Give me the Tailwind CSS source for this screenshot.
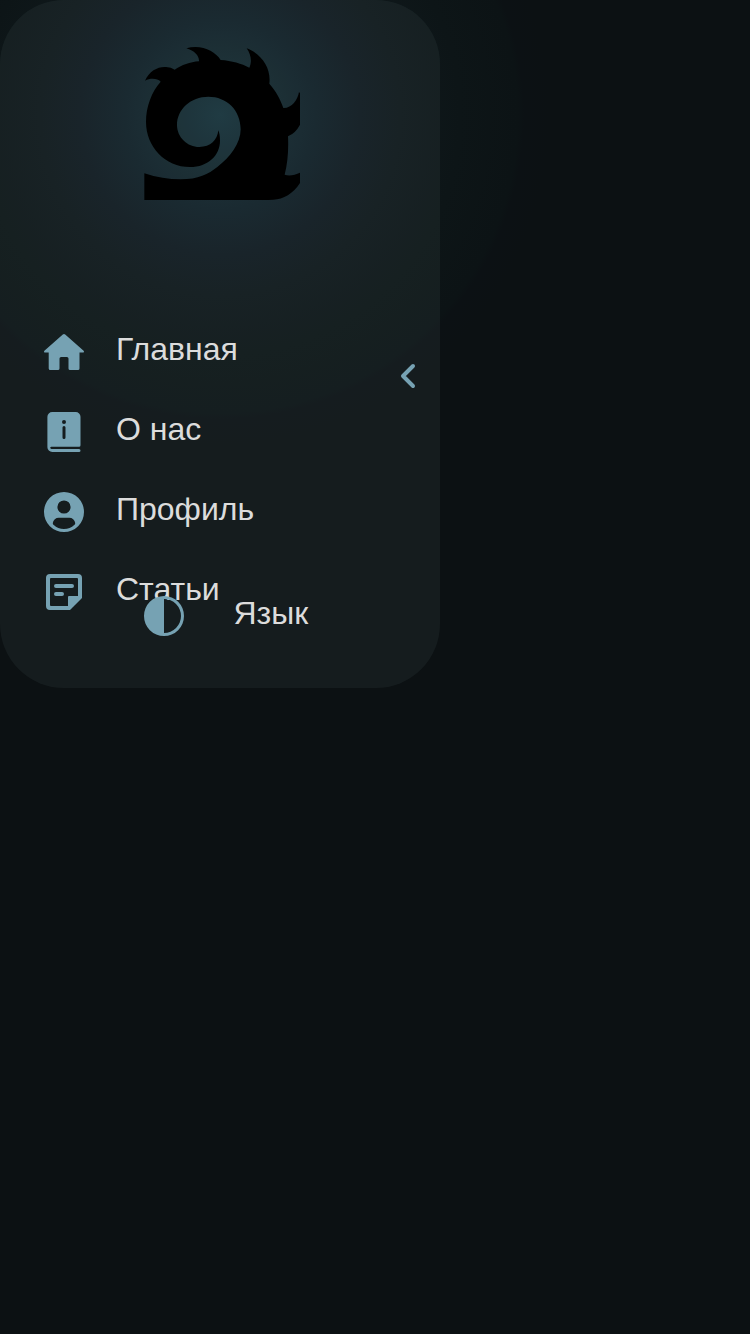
<!DOCTYPE html>
<html lang="ru">
<head>
<meta charset="utf-8">
<title>Меню</title>
<script src="https://cdn.jsdelivr.net/npm/@tailwindcss/browser@4"></script>
</head>
<body class="h-screen overflow-hidden bg-[#0c1113] bg-[radial-gradient(circle_at_220px_115px,#18323a_0px,#14272e_55px,#112027_95px,#101a20_140px,#0f181b_180px,#0d1517_240px,#0c1315_298px,#0c1114_304px,#0c1113_330px)] font-['Liberation_Sans',Arial,sans-serif] text-[32px] text-[#dcdcdc]">
<aside class="relative flex h-[688px] w-[440px] flex-col rounded-[64px] bg-[#d0ffff]/[0.047]">
  <div class="flex h-[312px] pt-11 pl-36">
    <svg class="size-[156px]" viewBox="42 42 468 468"><path d="M43 430C80 442 115 448 152 448C205 448 235 432 262 411C300 382 332 340 332 298C332 240 290 200 235 200C182 200 141 238 141 285C141 322 172 351 208 351C242 351 262 330 265 301C268 308 270 318 270 332C270 375 235 411 180 411C105 411 48 350 48 275C48 230 65 185 92 155C82 144 60 144 45 152C58 122 85 109 108 111Q124 112 134 119C155 105 180 96 207 94C208 78 194 62 169 55C212 42 255 62 272 90C305 92 335 101 358 113C366 95 364 75 350 55C395 72 424 115 418 161C437 182 450 205 460 234C485 235 503 210 507 186L510 190V284Q497 309 474 319C476 360 473 400 464 434C478 439 495 435 510 428V459C490 490 460 509 430 509L415 510H43Z"/></svg>
  </div>
  <nav class="flex flex-col pl-10">
    <a class="flex h-20 items-center gap-7">
      <svg class="size-12 text-[#76a2b3]" viewBox="0 0 24 24" fill="currentColor"><path d="M11.4 3.25a.9.900 0 0 1 1.2 0l9.2 8.100c.4.400.2.950-.4.950h-1.650V20.200a.8.800 0 0 1-.8.800h-3.900a.8.800 0 0 1-.8-.8v-4.900a.8.800 0 0 0-.8-.8h-2.900a.8.800 0 0 0-.8.800v4.900a.8.800 0 0 1-.8.800H5.150a.8.800 0 0 1-.8-.8v-7.900H2.600c-.6 0-.8-.55-.4-.95z"/></svg>
      <span class="pb-[7px]">Главная</span>
    </a>
    <a class="flex h-20 items-center gap-7">
      <svg class="size-12 text-[#76a2b3]" viewBox="0 0 24 24" fill="currentColor" fill-rule="evenodd"><path d="M3.700 4.400A2.400 2.400 0 0 1 6.100 2h11.750a2.400 2.400 0 0 1 2.400 2.400v14.200a.75.750 0 0 1-.75.750H5.700a.5.500 0 0 0 0 1.150h13.800a.75.750 0 0 1 0 1.500H6.100a2.400 2.400 0 0 1-2.400-2.400zM12 8a1 1 0 1 0 0-2 1 1 0 0 0 0 2zm-.75 1.750v5a.75.750 0 0 0 1.500 0v-5a.75.750 0 0 0-1.500 0z"/></svg>
      <span class="pb-[7px]">О нас</span>
    </a>
    <a class="flex h-20 items-center gap-7">
      <svg class="size-12 text-[#76a2b3]" viewBox="0 0 24 24" fill="currentColor" fill-rule="evenodd"><path d="M2 12a10 10 0 1 1 20 0 10 10 0 0 1-20 0zM15.300 9.500a3.300 3.300 0 1 0-6.600 0 3.300 3.300 0 0 0 6.600 0zM9.400 14.850a3 3 0 0 0-3 2.600c0 .5.200.8.500 1.050 1.300 1.200 3.100 2 5.100 2s3.800-.8 5.100-2c.3-.25.5-.55.500-1.050a3 3 0 0 0-3-2.600z"/></svg>
      <span class="pb-[7px]">Профиль</span>
    </a>
    <a class="flex h-20 items-center gap-7">
      <svg class="size-12 text-[#76a2b3]" viewBox="0 0 24 24" fill="currentColor" fill-rule="evenodd"><path d="M5 3h14a2 2 0 0 1 2 2v10l-6 6H5a2 2 0 0 1-2-2V5a2 2 0 0 1 2-2zm.5 2a.5.5 0 0 0-.5.5v13a.5.5 0 0 0 .5.5H14v-4.500a.5.5 0 0 1 .5-.5H19V5.500a.5.5 0 0 0-.5-.5zM8 8h8a1 1 0 0 1 0 2H8a1 1 0 0 1 0-2zm0 4h3a1 1 0 0 1 0 2H8a1 1 0 0 1 0-2z"/></svg>
      <span class="pb-[7px]">Статьи</span>
    </a>
  </nav>
  <div class="absolute top-[592px] left-[140px] flex h-12 items-center gap-[45.5px]">
    <svg class="size-12 text-[#76a2b3]" viewBox="0 0 24 24" fill="currentColor"><path fill-rule="evenodd" d="M12 2a10 10 0 1 1 0 20 10 10 0 0 1 0-20zm0 1.500v17a8.500 8.500 0 0 0 0-17z"/></svg>
    <span class="pb-[7px]">Язык</span>
  </div>
  <button class="absolute top-[352px] left-[384px]">
    <svg class="size-12" viewBox="0 0 48 48" fill="none" stroke="#76a2b3" stroke-width="4" stroke-linecap="round" stroke-linejoin="round"><path d="M29 14 19 24 29 34"/></svg>
  </button>
</aside>
</body>
</html>
